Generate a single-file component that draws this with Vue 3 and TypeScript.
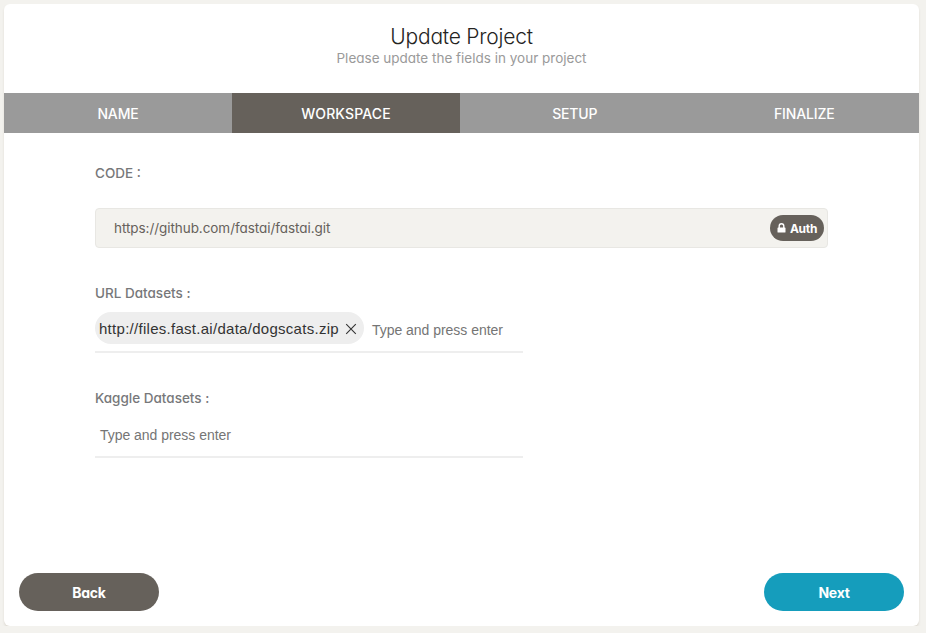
<script setup lang="ts">
import { ref } from 'vue'

const steps = ['NAME', 'WORKSPACE', 'SETUP', 'FINALIZE']
const current = ref(1)
const code = ref('https://github.com/fastai/fastai.git')
const urls = ref<string[]>(['http://files.fast.ai/data/dogscats.zip'])

function removeUrl(index: number) {
  urls.value.splice(index, 1)
}
</script>

<template>
  <main class="card">
    <header class="head">
      <h1><span>Update Project</span></h1>
      <p><span>Please update the fields in your project</span></p>
    </header>
    <nav class="steps">
      <div v-for="(step, i) in steps" :key="step" class="step" :class="[step.toLowerCase(), { active: i === current }]" @click="current = i">
        <span>{{ step }}</span>
      </div>
    </nav>
    <section class="body">
      <div class="label code-label"><span>CODE :</span></div>
      <div class="code">
        <span class="code-text">{{ code }}</span>
        <button class="auth">
          <svg width="9" height="10" viewBox="0 0 9 10">
            <path d="M2.2 5V3.1a2.3 2.3 0 0 1 4.6 0V5" fill="none" stroke="#fff" stroke-width="1.4" />
            <rect x="0.5" y="4.4" width="8" height="5.2" rx="0.7" fill="#fff" />
          </svg>
          <span>Auth</span>
        </button>
      </div>
      <div class="label url-label"><span>URL Datasets :</span></div>
      <div class="tags">
        <div v-for="(url, i) in urls" :key="url" class="chip">
          <span>{{ url }}</span>
          <svg width="12" height="12" viewBox="0 0 12 12" @click="removeUrl(i)">
            <path d="M1.2 1.2l9.6 9.6M10.8 1.2L1.2 10.8" fill="none" stroke="#333" stroke-width="1.1" />
          </svg>
        </div>
        <span class="hint">Type and press enter</span>
      </div>
      <div class="label kaggle-label"><span>Kaggle Datasets :</span></div>
      <div class="tags">
        <span class="hint">Type and press enter</span>
      </div>
    </section>
    <footer class="foot">
      <button class="btn back"><span>Back</span></button>
      <button class="btn next"><span>Next</span></button>
    </footer>
  </main>
</template>

<style>
body {
  background: #f3f2ee;
}
</style>

<style scoped>
* {
  box-sizing: border-box;
}
.card {
  width: 915px;
  height: 622px;
  margin: 4px 0 0 4px;
  display: flex;
  flex-direction: column;
  background: #fff;
  border-radius: 6px;
  box-shadow: 0 2px 2px rgba(204, 197, 185, 0.5);
  font-family: Inter, "Open Sans", sans-serif;
  font-feature-settings: "cv11";
  font-size: 14px;
  color: #66615b;
}
button {
  border: 0;
  padding: 0;
  font: inherit;
  font-feature-settings: inherit;
  color: #fff;
}
.head {
  height: 89px;
  padding-top: 20px;
  text-align: center;
}
h1 {
  margin: 0;
  font-size: 21px;
  line-height: 26px;
  font-weight: 300;
  letter-spacing: -0.22px;
  color: #252422;
}
p {
  margin: 0;
  font-size: 13.5px;
  line-height: 16px;
  color: #9a9a9a;
}
.steps {
  display: grid;
  grid-template-columns: 228px 228px 1fr 1fr;
  height: 40px;
  background: #9a9a9a;
}
.step {
  display: flex;
  align-items: center;
  justify-content: center;
  color: #fff;
  font-weight: 500;
  letter-spacing: -0.15px;
}
.step.active {
  background: #66615b;
  letter-spacing: 0.15px;
}
.body {
  flex: 1;
  padding: 30px 91px 0;
}
.label {
  height: 20px;
  line-height: 20px;
  font-size: 13.5px;
  font-weight: 500;
  color: #77787a;
}
.code {
  margin-top: 25px;
  height: 40px;
  display: flex;
  align-items: center;
  justify-content: space-between;
  padding: 0 3px 0 18px;
  background: #f3f2ee;
  border: 1px solid #e8e7e3;
  border-radius: 4px;
}
.code-text {
  font-size: 13.5px;
  letter-spacing: -0.06px;
}
.auth {
  width: 54px;
  height: 26px;
  border-radius: 13px;
  background: #66615b;
  display: flex;
  align-items: center;
  justify-content: center;
  gap: 4px;
  font-size: 12px;
  font-weight: 700;
  letter-spacing: -0.3px;
}
.url-label {
  margin-top: 35px;
}
.tags {
  width: 428px;
  height: 41px;
  margin-top: 9px;
  border-bottom: 2px solid #eee;
  display: flex;
  align-items: flex-start;
  font-family: "Liberation Sans", Arial, sans-serif;
}
.chip {
  width: 269px;
  height: 32px;
  border-radius: 16px;
  background: #eee;
  display: flex;
  align-items: center;
  justify-content: space-between;
  padding: 2px 7px 0 4px;
  color: #333;
}
.chip span {
  font-size: 15px;
  letter-spacing: 0.28px;
  line-height: 18px;
  padding-bottom: 1px;
}
.hint {
  line-height: 36px;
  margin-left: 8px;
  letter-spacing: -0.03px;
  color: #757575;
}
.kaggle-label {
  margin-top: 35px;
}
.tags .hint:first-child {
  margin-left: 5px;
}
.foot {
  display: flex;
  justify-content: space-between;
  padding: 0 15px 15px;
}
.btn {
  width: 140px;
  height: 38px;
  border-radius: 19px;
  font-size: 14px;
  font-weight: 700;
  letter-spacing: -0.25px;
}
.back {
  background: #66615b;
}
.next {
  background: #159dbc;
}
</style>
